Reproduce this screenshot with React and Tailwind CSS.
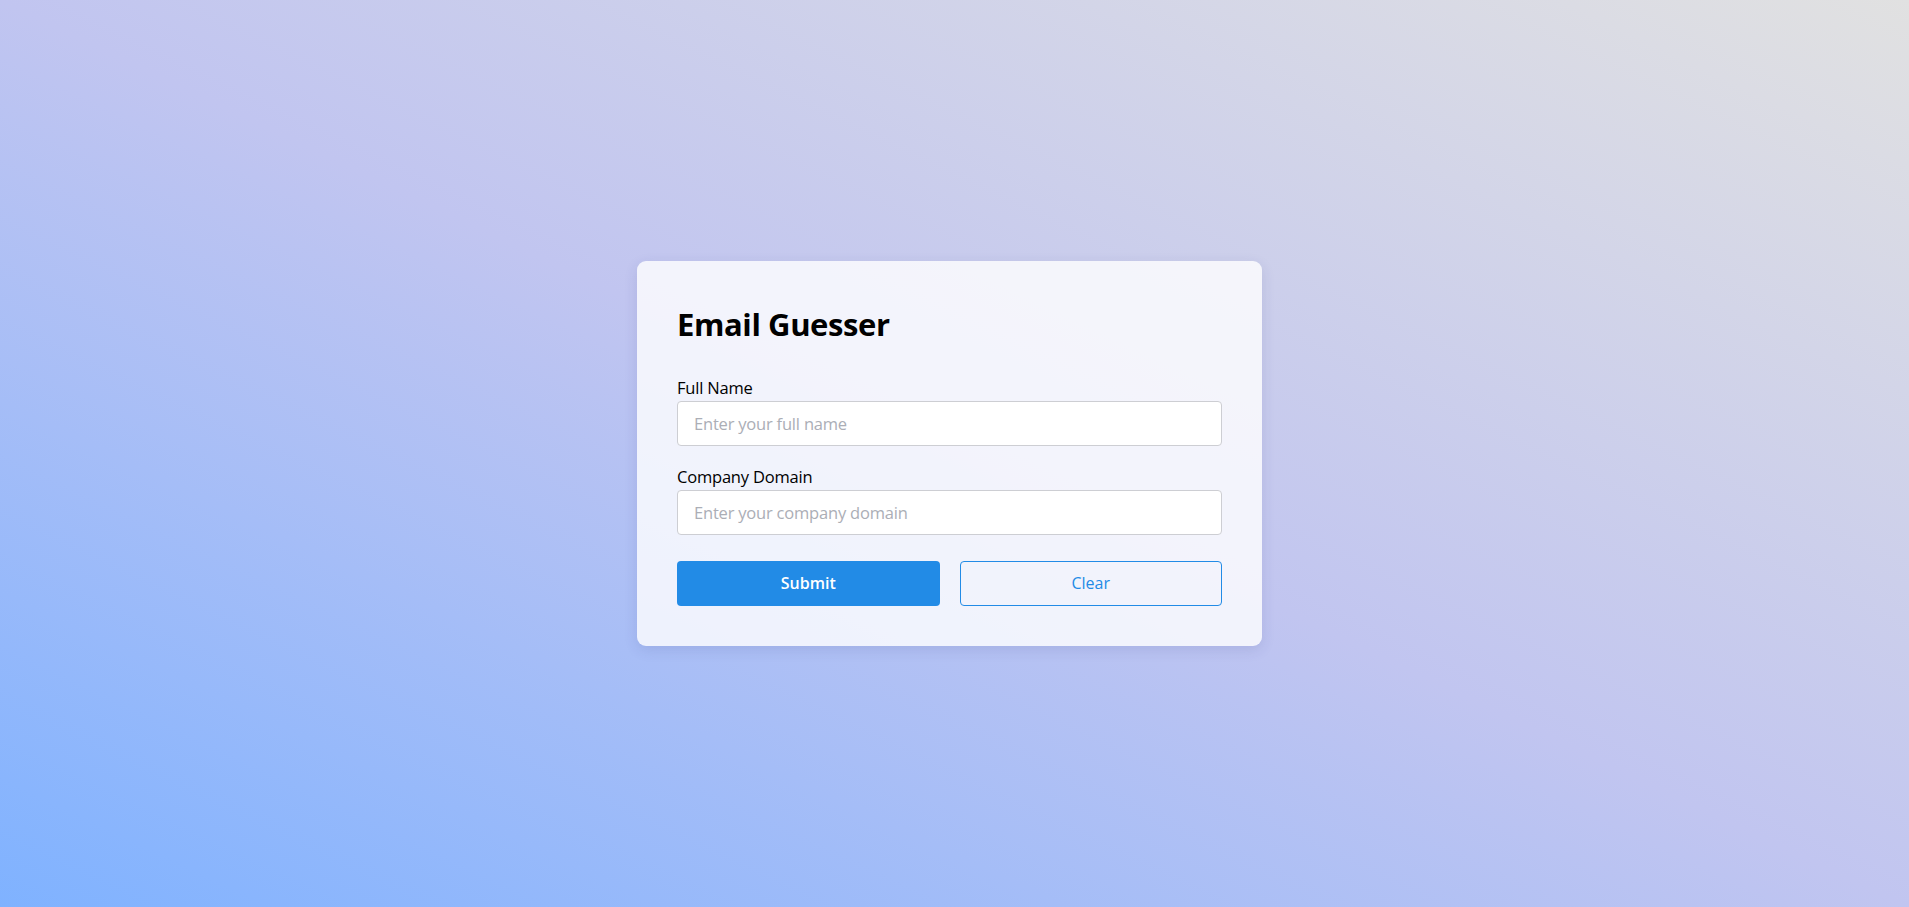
export default function App() {
  return (
    <div
      className="min-h-screen w-full flex items-center justify-center pr-[10px] pb-[1px] bg-linear-to-tr from-[#7fb2ff] via-[#c1c5f0] to-[#e1e1e1]"
      style={{ fontFamily: '"Open Sans", "Noto Sans", Arial, sans-serif' }}
    >
      <div className="w-[625px] rounded-[9px] bg-white/80 p-10 shadow-[0_4px_14px_rgba(40,50,120,0.12)]">
        <h1 className="m-0 text-[31px] leading-[46px] font-bold text-black tracking-[-0.4px] mb-[30px]">
          Email Guesser
        </h1>
        <div className="flex flex-col">
          <label className="text-[16.5px] leading-[22px] text-black mb-[2px] tracking-[-0.2px]">Full Name</label>
          <input
            type="text"
            placeholder="Enter your full name"
            className="h-[45px] w-full rounded-[4px] border border-[#cdced3] bg-white px-4 text-[16.5px] text-black outline-none placeholder:text-[#abaeb6] tracking-[-0.2px]"
          />
        </div>
        <div className="flex flex-col mt-[20px]">
          <label className="text-[16.5px] leading-[22px] text-black mb-[2px] tracking-[-0.2px]">Company Domain</label>
          <input
            type="text"
            placeholder="Enter your company domain"
            className="h-[45px] w-full rounded-[4px] border border-[#cdced3] bg-white px-4 text-[16.5px] text-black outline-none placeholder:text-[#abaeb6] tracking-[-0.2px]"
          />
        </div>
        <div className="mt-[26px] grid grid-cols-2 gap-5">
          <button className="h-[45px] rounded-[4px] bg-[#228be6] text-white text-[16px] font-semibold">
            Submit
          </button>
          <button className="h-[45px] rounded-[4px] border border-[#228be6] bg-transparent text-[#228be6] text-[16px] font-medium">
            Clear
          </button>
        </div>
      </div>
    </div>
  );
}
